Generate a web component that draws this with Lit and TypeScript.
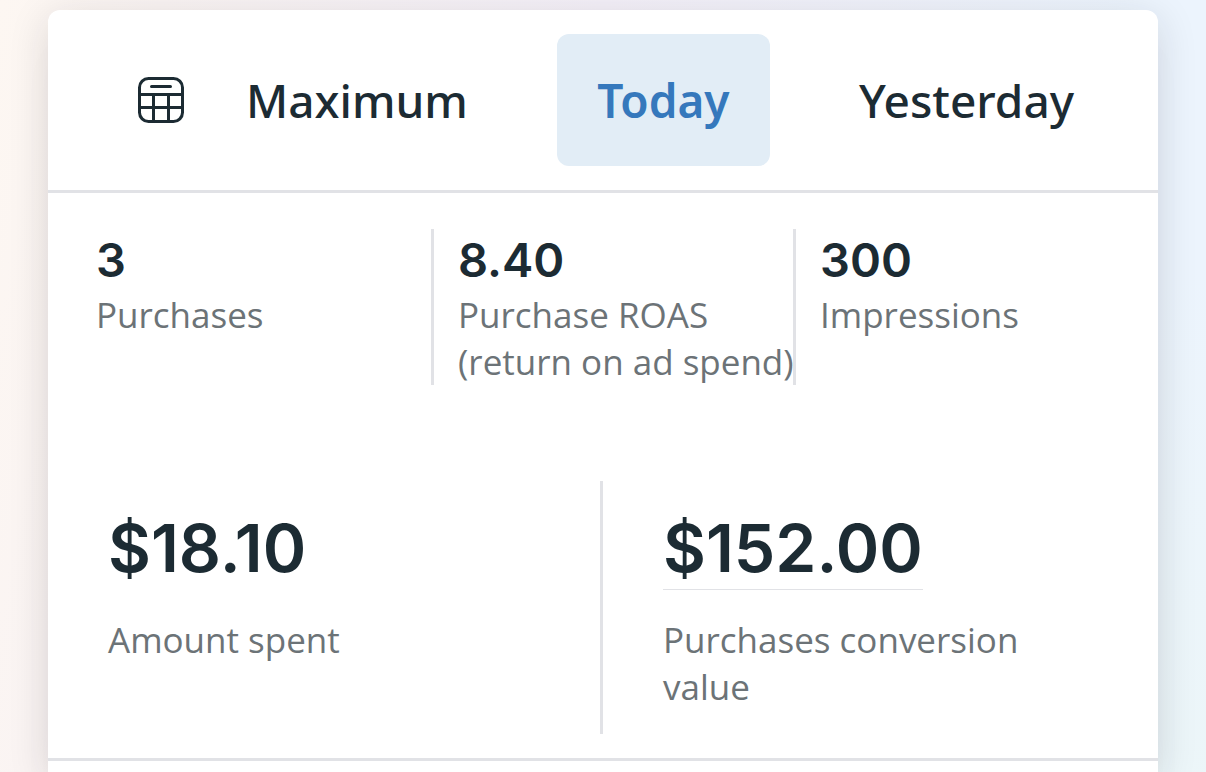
import { LitElement, html, css, svg } from "lit";
import { customElement, property, state } from "lit/decorators.js";
import { classMap } from "lit/directives/class-map.js";

interface Metric {
  value: string;
  label: string;
  underlined?: boolean;
}

const calendarIcon = svg`
  <rect x="1.5" y="1.5" width="43" height="43" rx="9" />
  <path d="M13.500 9.500H32.500M1.500 17.500H44.500M1.500 30.500H44.500M15.500 17.500V44.500M30.500 17.500V44.500" />
`;

@customElement("metric-cell")
export class MetricCell extends LitElement {
  @property({ type: Object }) metric: Metric = { value: "", label: "" };
  @property({ type: Boolean, reflect: true }) large = false;

  static styles = css`
    :host {
      display: block;
      box-sizing: border-box;
      padding-left: 24px;
      box-shadow: inset -3px 0 #e1e2e6;
    }
    :host(:last-child) {
      box-shadow: none;
    }
    :host([large]) {
      padding: 27px 60px 24px 60px;
    }
    .value {
      display: inline-block;
      vertical-align: top;
      font: 600 47px/62px Inter, sans-serif;
      color: #1c2b33;
    }
    .label {
      font-size: 35px;
      line-height: 47px;
      color: #6c7377;
    }
    :host([large]) .value {
      font-size: 66px;
      line-height: 81px;
      border-bottom: 1px solid transparent;
    }
    :host([large]) .underlined {
      border-bottom-color: #e1e2e6;
    }
    :host([large]) .label {
      margin-top: 26px;
    }
  `;

  render() {
    return html`
      <div class=${classMap({ value: true, underlined: !!this.metric.underlined })}>${this.metric.value}</div>
      <div class="label">${this.metric.label}</div>
    `;
  }
}

@customElement("app-root")
export class AppRoot extends LitElement {
  @state() private period = "Today";

  private periods = ["Maximum", "Today", "Yesterday"];
  private summary: Metric[] = [
    { value: "3", label: "Purchases" },
    { value: "8.40", label: "Purchase ROAS (return on ad spend)" },
    { value: "300", label: "Impressions" },
  ];
  private totals: Metric[] = [
    { value: "$18.10", label: "Amount spent" },
    { value: "$152.00", label: "Purchases conversion value", underlined: true },
  ];

  static styles = css`
    :host {
      display: flex;
      flex-direction: column;
      box-sizing: border-box;
      min-height: 100vh;
      padding: 10px 48px 0;
      overflow: hidden;
      font-family: "Open Sans", "Noto Sans", sans-serif;
      background:
        radial-gradient(circle at 100% 110%, #ecf6f8 0%, rgba(236, 246, 248, 0) 40%),
        linear-gradient(100deg, #fdf7f2 0%, #faf4f3 12%, #f4f0f8 45%, #ecf4fd 85%);
    }
    .card {
      flex: 1;
      background: #fff;
      border-radius: 12px 12px 0 0;
      box-shadow: 0 8px 40px rgba(28, 30, 33, 0.14), 0 40px 40px rgba(28, 30, 33, 0.02);
    }
    .periods {
      display: flex;
      justify-content: space-between;
      padding: 24px 44px 24px 50px;
      border-bottom: 3px solid #e1e2e6;
    }
    .period {
      display: flex;
      align-items: center;
      gap: 62px;
      height: 132px;
      padding: 0 40px;
      border: 0;
      border-radius: 12px;
      background: none;
      color: #1c2b33;
      font: 500 46px/64px "Noto Sans", sans-serif;
      cursor: pointer;
    }
    .selected {
      background: #e2edf6;
      color: #3578bc;
      font-weight: 600;
    }
    .icon {
      width: 46px;
      height: 46px;
      fill: none;
      stroke: #1c2b33;
      stroke-width: 3;
      stroke-linecap: round;
    }
    .summary {
      display: grid;
      grid-template-columns: repeat(3, minmax(0, 1fr));
      padding: 36px 0 96px 24px;
    }
    .totals {
      display: grid;
      grid-template-columns: repeat(2, minmax(0, 1fr));
      padding-bottom: 24px;
      border-bottom: 3px solid #e1e2e6;
    }
  `;

  render() {
    return html`
      <main class="card">
        <nav class="periods" aria-label="Date range">
          ${this.periods.map(
            (name) => html`
              <button
                type="button"
                class=${classMap({ period: true, selected: name === this.period })}
                aria-pressed=${name === this.period ? "true" : "false"}
                @click=${() => (this.period = name)}
              >
                ${name === "Maximum"
                  ? html`<svg class="icon" viewBox="0 0 46 46" aria-hidden="true">${calendarIcon}</svg>`
                  : null}
                <span>${name}</span>
              </button>
            `
          )}
        </nav>
        <section class="summary">
          ${this.summary.map((m) => html`<metric-cell .metric=${m}></metric-cell>`)}
        </section>
        <section class="totals">
          ${this.totals.map((m) => html`<metric-cell large .metric=${m}></metric-cell>`)}
        </section>
      </main>
    `;
  }
}
